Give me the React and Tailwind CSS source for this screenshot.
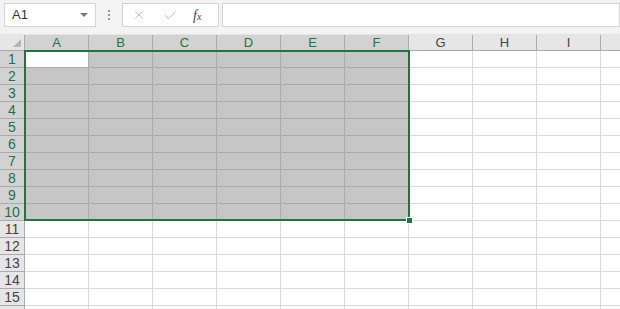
import { X, Check } from "lucide-react"

const cols = ["A", "B", "C", "D", "E", "F", "G", "H", "I", ""]
const rows = Array.from({ length: 16 }, (_, i) => i + 1)

const isSel = (c, r) => c < 6 && r <= 10

const App = () => {
    return (
        <div className="w-[620px] h-[309px] overflow-hidden bg-white font-['Liberation_Sans',sans-serif] select-none">
            {/* formula bar */}
            <div className="h-[35px] bg-[#f3f3f3] flex items-start pt-[3px] border-b border-[#e4e4e4]">
                <div className="ml-[4px] w-[92px] h-[24px] bg-white border border-[#d4d4d4] flex items-center justify-between pl-[7px] pr-[7px]">
                    <span className="text-[13px] text-[#333]">A1</span>
                    <span className="w-0 h-0 border-l-[4px] border-r-[4px] border-t-[4px] border-l-transparent border-r-transparent border-t-[#777]" />
                </div>
                <div className="w-[26px] h-[24px] flex flex-col items-center justify-center gap-[2px]">
                    <span className="w-[2px] h-[2px] bg-[#999]" />
                    <span className="w-[2px] h-[2px] bg-[#999]" />
                    <span className="w-[2px] h-[2px] bg-[#999]" />
                </div>
                <div className="w-[97px] h-[24px] bg-white border border-[#d4d4d4] flex items-center">
                    <X className="ml-[9px] w-[14px] h-[14px] text-[#b8b8b8]" strokeWidth={1.5} />
                    <Check className="ml-[17px] w-[15px] h-[15px] text-[#b8b8b8]" strokeWidth={1.5} />
                    <span className="ml-[15px] text-[14px] italic text-[#444] font-['Liberation_Serif',serif]">f<span className="text-[10px]">x</span></span>
                </div>
                <div className="ml-[3px] flex-1 h-[24px] bg-white border border-[#d4d4d4]" />
            </div>

            {/* grid */}
            <div className="relative">
                <div className="grid grid-cols-[25px_repeat(10,64px)]">
                    <div className="h-[16px] bg-[#e6e6e6] border-r border-b border-[#ababab] relative">
                        <span className="absolute right-[3px] bottom-[3px] w-0 h-0 border-l-[8px] border-l-transparent [border-bottom:8px_solid_#b5b5b5]" />
                    </div>
                    {cols.map((c, i) => (
                        <div
                            key={"c" + i}
                            className={
                                i < 6
                                    ? "h-[16px] bg-[#d2d2d2] border-r border-b border-[#ababab] text-[#217346] text-[13px] leading-[15px] text-center"
                                    : "h-[16px] bg-[#e6e6e6] border-r border-b border-[#ababab] text-[#444] text-[13px] leading-[15px] text-center"
                            }
                        >
                            {c}
                        </div>
                    ))}
                    {rows.map((r) => (
                        <>
                            <div
                                key={"h" + r}
                                className={
                                    r <= 10
                                        ? "h-[17px] bg-[#d2d2d2] border-r border-b border-[#ababab] text-[#217346] text-[14px] leading-[16px] text-center"
                                        : "h-[17px] bg-[#e6e6e6] border-r border-b border-[#ababab] text-[#444] text-[14px] leading-[16px] text-center"
                                }
                            >
                                {r}
                            </div>
                            {cols.map((c, i) => (
                                <div
                                    key={"r" + r + "c" + i}
                                    className={
                                        i === 0 && r === 1
                                            ? "h-[17px] bg-white border-r border-b border-[#ababab]"
                                            : isSel(i, r)
                                            ? "h-[17px] bg-[#c6c6c6] border-r border-b border-[#ababab]"
                                            : "h-[17px] bg-white border-r border-b border-[#d9d9d9]"
                                    }
                                />
                            ))}
                        </>
                    ))}
                </div>

                {/* selection */}
                <div className="absolute left-[24px] top-[15px] w-[386px] h-[171px] border-2 border-[#217346] pointer-events-none">
                    <span className="absolute right-[-5px] bottom-[-5px] w-[7px] h-[7px] bg-[#217346] border border-white" />
                </div>
            </div>
        </div>
    )
}

export default App
